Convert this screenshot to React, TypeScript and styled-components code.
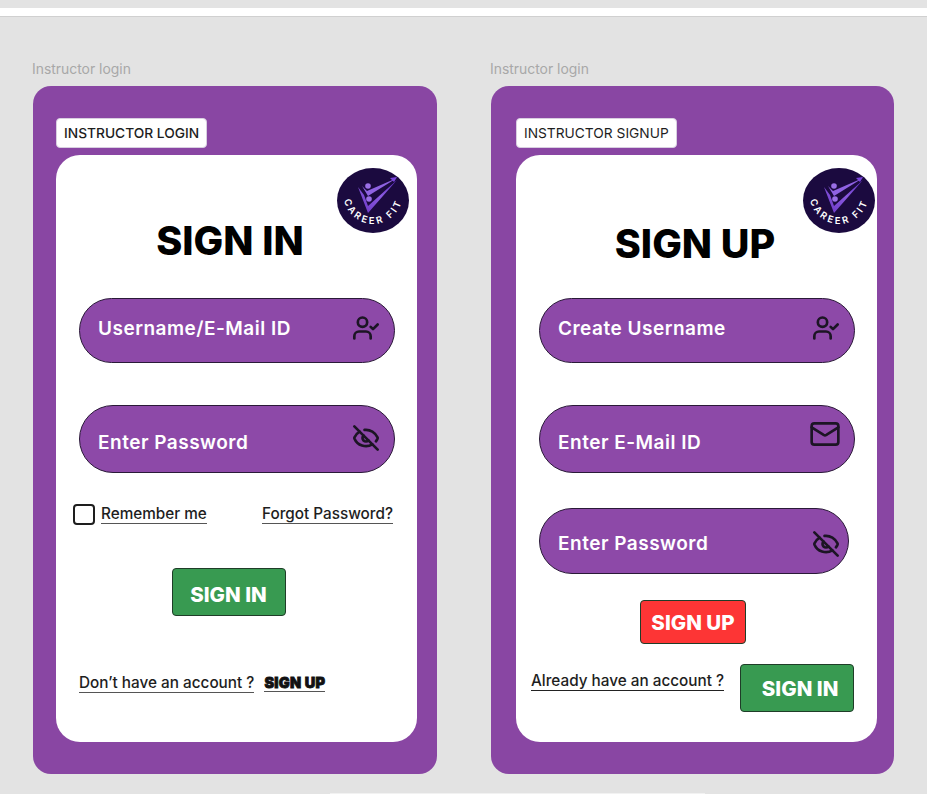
import * as React from 'react';
import styled, { createGlobalStyle } from 'styled-components';
import { EyeOff, Mail, UserCheck } from 'lucide-react';

const GlobalStyle = createGlobalStyle`
  html, body {
    margin: 0;
    padding: 0;
    background: #e3e3e3;
  }
  * {
    box-sizing: border-box;
  }
`;

const Page = styled.div`
  width: 927px;
  height: 794px;
  padding-top: 8px;
  overflow: hidden;
  font-family: Inter, 'Liberation Sans', sans-serif;
  background: #e3e3e3;
`;

const TopBar = styled.div`
  height: 9px;
  background: #fff;
  border-bottom: 1px solid #d0d0d0;
`;

const Canvas = styled.div`
  display: flex;
  gap: 54px;
  padding: 43px 0 0 33px;
`;

const Column = styled.section`
  display: flex;
  flex-direction: column;
  width: ${p => p.$width}px;
`;

const FrameLabel = styled.div`
  height: 26px;
  margin-left: -1px;
  font-size: 13.9px;
  line-height: 19px;
  color: #a8a8a8;
`;

const Frame = styled.div`
  display: flex;
  flex-direction: column;
  height: 688px;
  padding: 32px 0 0 ${p => p.$inset}px;
  border-radius: 18px;
  background: #8946a3;
`;

const Tag = styled.div`
  align-self: flex-start;
  height: 30px;
  padding: 0 7px;
  border: 1px solid #d8cfe0;
  border-radius: 4px;
  background: #fff;
  color: #1e1e1e;
  font-size: 13.75px;
  font-weight: ${p => (p.$medium ? 500 : 400)};
  line-height: 28px;
  white-space: nowrap;
`;

const Card = styled.div`
  position: relative;
  display: flex;
  flex-direction: column;
  width: 361px;
  height: 587px;
  margin-top: 7px;
  padding-left: 23px;
  border-radius: 24px;
  background: #fff;
`;

const LogoMark = styled.svg`
  position: absolute;
  top: 13px;
  right: ${p => p.$right}px;
  width: 72px;
  height: 65px;
`;

const Title = styled.h1`
  width: ${p => p.$width}px;
  margin: ${p => p.$top}px 0 ${p => p.$bottom}px;
  color: #000;
  font-size: 39.5px;
  font-weight: 800;
  line-height: 46px;
  text-align: center;
`;

const Field = styled.div`
  display: flex;
  flex-shrink: 0;
  align-items: center;
  justify-content: space-between;
  width: ${p => p.$width || 316}px;
  height: ${p => p.$height}px;
  margin-bottom: ${p => p.$gap}px;
  padding: 0 15px 0 18px;
  border: 1px solid #2a1a38;
  border-radius: 34px;
  background: #8d49a8;
`;

const FieldLabel = styled.span`
  color: #fff;
  font-size: 19px;
  font-weight: 600;
  line-height: 24px;
  letter-spacing: 0.5px;
  transform: translateY(${p => p.$shift || 0}px);
`;

const FieldIcon = styled.span`
  display: flex;
  color: #1c1524;
  transform: translate(${p => p.$x || 0}px, ${p => p.$y || 0}px);
`;

const OptionsRow = styled.div`
  display: flex;
  align-items: center;
  justify-content: space-between;
  width: 320px;
  height: 22px;
  margin: 0 0 0 -6px;
`;

const RememberGroup = styled.label`
  display: flex;
  align-items: center;
  gap: 6px;
`;

const CheckBox = styled.span`
  width: 22px;
  height: 21px;
  border: 2.5px solid #1e1e1e;
  border-radius: 4px;
  background: #fff;
`;

const LinkText = styled.span`
  display: inline-block;
  border-bottom: 1px solid #555;
  color: #1e1e1e;
  font-size: 15.3px;
  font-weight: 500;
  line-height: 18px;
  white-space: nowrap;
`;

const HeavyLink = styled(LinkText)`
  font-size: 14.5px;
  font-weight: 900;
  letter-spacing: 0.3px;
  color: #111;
  -webkit-text-stroke: 0.8px #111;
  line-height: 16px;
`;

const ActionButton = styled.button`
  display: block;
  flex-shrink: 0;
  width: ${p => p.$width}px;
  height: ${p => p.$height}px;
  padding: ${p => p.$padTop || 0}px 0 0 ${p => p.$padLeft || 0}px;
  border: 1px solid #1f3d28;
  border-radius: 4px;
  background: ${p => p.$color};
  color: #fff;
  font-family: inherit;
  font-size: 20.5px;
  font-weight: 800;
`;

const CenteredAction = styled.div`
  display: flex;
  justify-content: center;
  width: ${p => p.$width}px;
  margin-top: ${p => p.$top}px;
`;

const AccountRow = styled.div`
  display: flex;
  align-items: center;
  gap: 10px;
  margin-top: 58px;
`;

const SignupFooter = styled.div`
  display: flex;
  align-items: flex-start;
  gap: 16px;
  margin: 20px 0 0 -8px;
`;

const FooterPrompt = styled(LinkText)`
  margin-top: 8px;
  border-bottom-color: #222;
`;

const BottomSliver = styled.div`
  width: 375px;
  height: 1px;
  margin: 19px 0 0 330px;
  background: #f2f2f2;
`;

const Logo = ({ right }: { right: number }) => (
  <LogoMark $right={right} viewBox="0 0 72 65" aria-label="Career Fit">
    <defs>
      <linearGradient id="logoTick" x1="0" y1="1" x2="1" y2="0">
        <stop offset="0" stopColor="#6a35c4" />
        <stop offset="0.55" stopColor="#8a5ae0" />
        <stop offset="1" stopColor="#5b2cc0" />
      </linearGradient>
    </defs>
    <ellipse cx="36" cy="32.5" rx="36" ry="32.5" fill="#1b0a3f" />
    <polygon points="21,19 27,27 31,38 60,12 31,45" fill="url(#logoTick)" />
    <polygon points="25,18 30,23 60,10 31,28" fill="#8f62e2" />
    <polygon points="60,9 53,10 57,14" fill="#7a45dc" />
    <circle cx="31" cy="18" r="2.8" fill="#9a6fe6" />
    <circle cx="32" cy="31" r="2.8" fill="#9a6fe6" />
    <path id="logoArc" d="M 6 24 A 30 32 0 0 0 66 24" fill="none" />
    <text fill="#fff" fontFamily="Inter, sans-serif" fontSize="9.5" fontWeight="600" letterSpacing="2.6" textAnchor="middle">
      <textPath href="#logoArc" startOffset="50%">
        CAREER FIT
      </textPath>
    </text>
  </LogoMark>
);

const SignInPanel = () => (
  <Column $width={404}>
    <FrameLabel>Instructor login</FrameLabel>
    <Frame $inset={23}>
      <Tag $medium>INSTRUCTOR LOGIN</Tag>
      <Card>
        <Logo right={8} />
        <Title $width={302} $top={63} $bottom={34}>
          SIGN IN
        </Title>
        <Field $height={65} $gap={42}>
          <FieldLabel $shift={-2}>Username/E-Mail ID</FieldLabel>
          <FieldIcon $x={1} $y={-3}>
            <UserCheck size={28} strokeWidth={2.3} />
          </FieldIcon>
        </Field>
        <Field $height={68} $gap={30}>
          <FieldLabel $shift={4}>Enter Password</FieldLabel>
          <FieldIcon $x={1} $y={-1}>
            <EyeOff size={28} strokeWidth={2.3} />
          </FieldIcon>
        </Field>
        <OptionsRow>
          <RememberGroup>
            <CheckBox />
            <LinkText>Remember me</LinkText>
          </RememberGroup>
          <LinkText>Forgot Password?</LinkText>
        </OptionsRow>
        <CenteredAction $width={299} $top={43}>
          <ActionButton $width={114} $height={48} $padTop={4} $color="#389a51">
            SIGN IN
          </ActionButton>
        </CenteredAction>
        <AccountRow>
          <LinkText>Don’t have an account ?</LinkText>
          <HeavyLink>SIGN UP</HeavyLink>
        </AccountRow>
      </Card>
    </Frame>
  </Column>
);

const SignUpPanel = () => (
  <Column $width={403}>
    <FrameLabel>Instructor login</FrameLabel>
    <Frame $inset={25}>
      <Tag>INSTRUCTOR SIGNUP</Tag>
      <Card>
        <Logo right={2} />
        <Title $width={312} $top={66} $bottom={31}>
          SIGN UP
        </Title>
        <Field $height={65} $gap={42}>
          <FieldLabel $shift={-2}>Create Username</FieldLabel>
          <FieldIcon $x={1} $y={-3}>
            <UserCheck size={28} strokeWidth={2.3} />
          </FieldIcon>
        </Field>
        <Field $height={68} $gap={35}>
          <FieldLabel $shift={4}>Enter E-Mail ID</FieldLabel>
          <FieldIcon $x={2} $y={-5}>
            <Mail size={32} strokeWidth={2} />
          </FieldIcon>
        </Field>
        <Field $height={66} $width={310} $gap={0}>
          <FieldLabel $shift={3}>Enter Password</FieldLabel>
          <FieldIcon $x={7} $y={3}>
            <EyeOff size={28} strokeWidth={2.3} />
          </FieldIcon>
        </Field>
        <CenteredAction $width={308} $top={26}>
          <ActionButton $width={106} $height={44} $color="#fd3535">
            SIGN UP
          </ActionButton>
        </CenteredAction>
        <SignupFooter>
          <FooterPrompt>Already have an account ?</FooterPrompt>
          <ActionButton $width={114} $height={48} $padLeft={6} $color="#389a51">
            SIGN IN
          </ActionButton>
        </SignupFooter>
      </Card>
    </Frame>
  </Column>
);

export default function App() {
  return (
    <Page>
      <GlobalStyle />
      <TopBar />
      <Canvas>
        <SignInPanel />
        <SignUpPanel />
      </Canvas>
      <BottomSliver />
    </Page>
  );
}
